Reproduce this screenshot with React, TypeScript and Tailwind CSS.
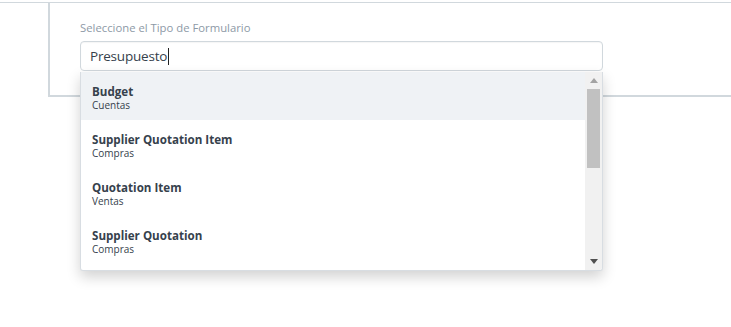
import React from 'react';

interface Option {
  title: string;
  module: string;
}

const options: Option[] = [
  { title: 'Budget', module: 'Cuentas' },
  { title: 'Supplier Quotation Item', module: 'Compras' },
  { title: 'Quotation Item', module: 'Ventas' },
  { title: 'Supplier Quotation', module: 'Compras' },
];

const App: React.FC = () => {
  return (
    <div className="min-h-[327px] w-[731px] bg-white font-['Open_Sans',sans-serif]">
      <div className="h-[3px] border-b border-[#d1d8dd]" />
      <div className="relative ml-[48px] h-[94px] border-b-2 border-l-2 border-[#d1d8dd] pl-[30px] pt-[17px]">
        <label className="block text-[11.3px] leading-[16px] text-[#8d99a6]">
          Seleccione el Tipo de Formulario
        </label>
        <div className="mt-[5px] flex h-[30px] w-[523px] items-center rounded-[4px] border border-[#d1d8dd] bg-white pl-[9px] text-[13.5px] text-[#36414c] shadow-[inset_0_1px_1px_rgba(0,0,0,0.04)]">
          <span className="tracking-[-0.2px]">Presupuesto</span>
          <span className="ml-[1px] h-[17px] w-px bg-[#222]" />
        </div>

        <div className="absolute left-[30px] top-[69px] z-10 flex h-[199px] w-[523px] overflow-hidden rounded-b-[3px] border border-t-0 border-[#d8dde2] bg-white shadow-[0_6px_14px_rgba(0,0,0,0.18)]">
          <ul className="flex-1 overflow-hidden">
            {options.map((opt, i) => (
              <li
                key={opt.title}
                className={`flex h-[48px] flex-col justify-center pl-[11px] pt-[4px] ${i === 0 ? 'bg-[#eff2f5]' : 'bg-white'}`}
              >
                <span className="text-[11.6px] font-bold leading-[14px] text-[#36414c]">{opt.title}</span>
                <span className="text-[10px] leading-[12px] text-[#36414c]">{opt.module}</span>
              </li>
            ))}
          </ul>
          <div className="flex w-[17px] flex-col items-center bg-[#f1f1f1]">
            <div className="flex h-[17px] w-full items-center justify-center">
              <svg width="8" height="5" viewBox="0 0 8 5">
                <path d="M4 0L8 5H0Z" fill="#a3a3a3" />
              </svg>
            </div>
            <div className="h-[79px] w-[13px] bg-[#c1c1c1]" />
            <div className="flex-1" />
            <div className="flex h-[17px] w-full items-center justify-center">
              <svg width="8" height="5" viewBox="0 0 8 5">
                <path d="M0 0H8L4 5Z" fill="#505050" />
              </svg>
            </div>
          </div>
        </div>
      </div>
    </div>
  );
};

export default App;
